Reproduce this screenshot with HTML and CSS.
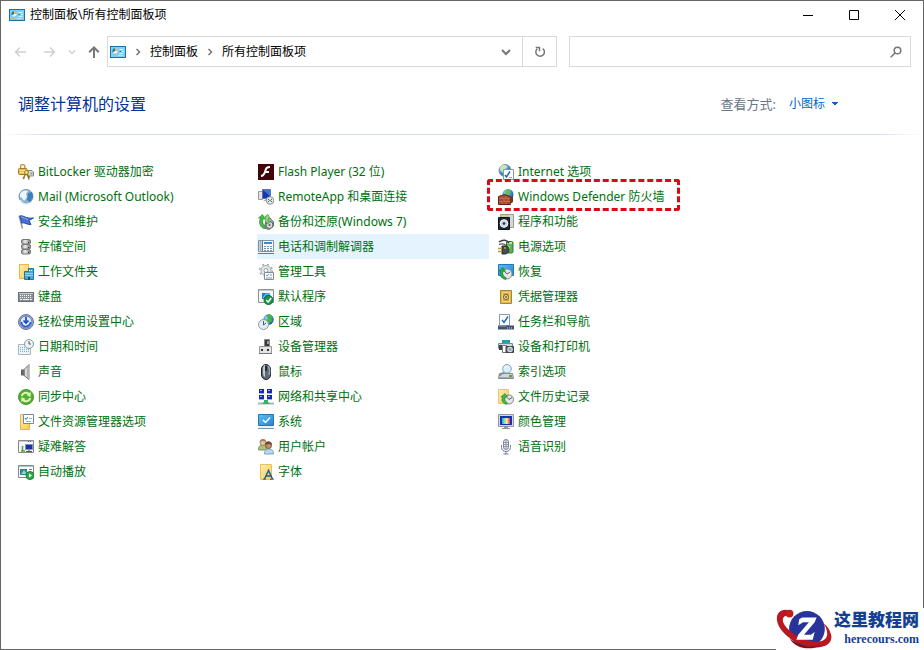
FILE: index.html
```html
<!DOCTYPE html>
<html lang="zh-CN">
<head>
<meta charset="utf-8">
<title>控制面板\所有控制面板项</title>
<link rel="stylesheet" href="styles.css">
</head>
<body>
<svg class="defs" aria-hidden="true">
  <defs>
    <linearGradient id="metal" x1="0" x2="1"><stop offset="0" stop-color="#888"/><stop offset=".4" stop-color="#eee"/><stop offset="1" stop-color="#777"/></linearGradient>
    <linearGradient id="folder" x1="0" x2="1" y2="1"><stop offset="0" stop-color="#ffefb0"/><stop offset="1" stop-color="#f5ca55"/></linearGradient>
    <linearGradient id="screen" x1="0" x2="1" y2="1"><stop offset="0" stop-color="#5cc0f5"/><stop offset="1" stop-color="#2383d4"/></linearGradient>
    <linearGradient id="spectrum" x1="0" x2="1"><stop offset="0" stop-color="#12b5d8"/><stop offset=".35" stop-color="#8fe9a0"/><stop offset=".6" stop-color="#fff27a"/><stop offset="1" stop-color="#e5306a"/></linearGradient>
    <radialGradient id="globe" cx=".35" cy=".3" r=".8"><stop offset="0" stop-color="#9bdcff"/><stop offset=".5" stop-color="#3a94d8"/><stop offset="1" stop-color="#154f98"/></radialGradient>
    <symbol id="panel" viewBox="0 0 16 12">
      <rect x=".5" y=".5" width="15" height="11" fill="#7fd0f7" stroke="#1b6fa8"/>
      <circle cx="5" cy="5" r="2.500" fill="#e2f5ff"/><path d="M5 5V2.300A2.700 2.700 0 0 1 7.700 5Z" fill="#f5b928"/><path d="M5 5 2.700 6.500A2.700 2.700 0 0 1 5 2.300Z" fill="#2378b5"/>
      <path d="M3 9.500h3" stroke="#e5b83d"/><path d="M8 9.500h5" stroke="#b5e4fa"/><path d="M9.500 3.500h4M9.500 7.500h4" stroke="#d5f1ff"/><path d="M9.500 5.500h2" stroke="#236c9f"/><path d="M11.500 5.500h2" stroke="#fff"/>
    </symbol>
    <symbol id="chevron" viewBox="0 0 8 8"><path d="m2.500 1 3 3-3 3" fill="none" stroke="#777" stroke-width="1.500"/></symbol>
  </defs>
</svg>

<div class="window">
  <header class="titlebar">
    <svg class="app-icon"><use href="#panel"/></svg>
    <h1 class="window-title">控制面板\所有控制面板项</h1>
    <div class="window-buttons">
      <button type="button" aria-label="最小化"><svg viewBox="0 0 10 10"><path d="M0 5.500h10"/></svg></button>
      <button type="button" aria-label="最大化"><svg viewBox="0 0 10 10"><path d="M.5.500h9v9h-9z"/></svg></button>
      <button type="button" aria-label="关闭"><svg viewBox="0 0 10 10"><path d="m0 0 10 10M10 0 0 10"/></svg></button>
    </div>
  </header>

  <div class="toolbar">
    <nav class="history">
      <button type="button" aria-label="后退" disabled><svg viewBox="0 0 12 12"><path d="M12 6H1.500M6 1.500 1.500 6 6 10.500"/></svg></button>
      <button type="button" aria-label="前进" disabled><svg viewBox="0 0 12 12"><path d="M0 6h10.500M6 1.500 10.500 6 6 10.500"/></svg></button>
      <button type="button" class="recent" aria-label="最近" disabled><svg viewBox="0 0 8 12"><path d="m1 4.500 3 3 3-3"/></svg></button>
      <button type="button" class="up" aria-label="向上"><svg viewBox="0 0 12 12"><path d="M6 12V1.500M1.200 6.300 6 1.500l4.800 4.800"/></svg></button>
    </nav>
    <div class="address">
      <svg class="app-icon"><use href="#panel"/></svg>
      <svg class="crumb-arrow"><use href="#chevron"/></svg>
      <a href="#">控制面板</a>
      <svg class="crumb-arrow"><use href="#chevron"/></svg>
      <a href="#">所有控制面板项</a>
      <button type="button" class="history-drop" aria-label="以前的位置"><svg viewBox="0 0 12 12"><path d="m2 4 4 4 4-4"/></svg></button>
      <button type="button" class="refresh" aria-label="刷新"><svg viewBox="0 0 12 12"><path d="M8.800 2.600A4.300 4.300 0 1 1 3.200 2.800M1.700 1.500h3.800v3.800"/></svg></button>
    </div>
    <label class="search">
      <input type="search" aria-label="搜索控制面板">
      <svg viewBox="0 0 12 12"><circle cx="7.500" cy="4.500" r="3.300"/><path d="M5.200 6.800.7 11.300"/></svg>
    </label>
  </div>

  <main class="content">
    <div class="heading">
      <h2>调整计算机的设置</h2>
      <div class="view-by">
        <label for="view">查看方式:</label>
        <select id="view"><option>小图标</option></select>
      </div>
    </div>

    <ul class="items">
      <li><a href="#"><svg viewBox="0 0 16 16"><path d="M2.500 5V2.800a2.200 2.200 0 0 1 4.400 0V5" fill="none" stroke="#c39a3c" stroke-width="1.500"/><rect x=".5" y="4.500" width="8.500" height="6" rx="1" fill="#f0be4b" stroke="#a87a22"/><path d="M2 6.500h5M2 8.500h5" stroke="#ffe199"/><path d="M9 6.500h5l1.500 1.500v4H9z" fill="#d3d6db" stroke="#888"/><circle cx="8.500" cy="8.500" r="2" fill="#f3d37d" stroke="#a87a22"/><path d="m7.500 10-2.500 5M9.500 10l1.500 5.500M5.500 13.500l1.500.5M10.500 13h1.500" fill="none" stroke="#96691f" stroke-width="1.300"/><circle cx="13.500" cy="9.500" r="1" fill="#53b956"/></svg>BitLocker 驱动器加密</a></li>
      <li><a href="#"><svg viewBox="0 0 16 16"><circle cx="8" cy="7.500" r="7" fill="#86b5d8" stroke="#7f93a5"/><path d="M2 5C4 1 8 1 10 2L8 5l1 3-3 4-2-3-2-1z" fill="#eef6fb"/><path d="m10 4 4-1 1 5-3 5-3-2z" fill="#3f7fb8"/><path d="M2 11c2 4 6 5 10 3" fill="none" stroke="#e3eaf0" stroke-width="1.500"/></svg>Mail (Microsoft Outlook)</a></li>
      <li><a href="#"><svg viewBox="0 0 16 16"><path d="m1 1.500 3.500 13" stroke="#8d98a5" stroke-width="1.500"/><path d="M2 2c4-1 5 3 13.500 2L11 6.500l2 4C9 11 7 8 3.700 9z" fill="#496fd2" stroke="#2548a4"/><path d="M3 3c3 0 4 2 7 2.500" stroke="#91abf0" fill="none"/></svg>安全和维护</a></li>
      <li><a href="#"><svg viewBox="0 0 16 16"><g fill="url(#metal)" stroke="#777"><rect x="3.500" y=".5" width="9" height="4.500" rx="1.500"/><rect x="3.500" y="5.500" width="9" height="4.500" rx="1.500"/><rect x="3.500" y="10.500" width="9" height="4.500" rx="1.500"/></g><path d="M10 3.500h1M10 8.500h1M10 13.500h1" stroke="#333"/></svg>存储空间</a></li>
      <li><a href="#"><svg viewBox="0 0 16 16"><path d="M1.500.500h9v14h-9z" fill="url(#folder)" stroke="#e2b848"/><path d="M6.500 7.500h4v-3h5v11h-9z" fill="#49a9d2" stroke="#1e759e"/><path d="M11 6.500h4M7.500 9.500h7M7.500 11.500h7" stroke="#e5f8ff" stroke-dasharray="1 1"/><path d="M10 13h2v2.500h-2z" fill="#124e6f"/></svg>工作文件夹</a></li>
      <li><a href="#"><svg viewBox="0 0 16 16"><rect x=".5" y="3.500" width="15" height="9" fill="#8a9096" stroke="#6a6f75"/><path d="M1 4.500h14" stroke="#ccc"/><path d="M2 6.500h12M2 8.500h12" stroke="#fff" stroke-width="1" stroke-dasharray="1 1"/><path d="M2 10.500h2m1 0h6m1 0h2" stroke="#eee"/></svg>键盘</a></li>
      <li><a href="#"><svg viewBox="0 0 16 16"><circle cx="8" cy="8" r="7.500" fill="#aab5d1" stroke="#6675a3"/><circle cx="8" cy="8" r="6" fill="#dce9ff" stroke="#5672b5"/><path d="M8 3v6M5.500 6.500 8 9l2.500-2.500" fill="none" stroke="#1b4ac3" stroke-width="1.700"/><path d="M3.500 8a4.500 4.500 0 0 0 9 0" fill="none" stroke="#2859bf" stroke-width="1.700"/></svg>轻松使用设置中心</a></li>
      <li><a href="#"><svg viewBox="0 0 16 16"><path d="M.5 5.500h12v10H.500z" fill="#edf4f8" stroke="#a5b8c2"/><path d="M2 8.500h9M2 10.500h9M2 12.500h9" stroke="#70b3cb" stroke-dasharray="1 1"/><circle cx="11" cy="5" r="4.500" fill="#f0f3f4" stroke="#8c969b"/><path d="M11 2v3h2" fill="none" stroke="#485a66"/></svg>日期和时间</a></li>
      <li><a href="#"><svg viewBox="0 0 16 16"><path d="M3 5.500h3v6H3z" fill="#60656a"/><path d="m6 5.500 5-5v15l-5-4z" fill="url(#metal)" stroke="#777"/><path d="M11 1v14" stroke="#c7c7c7" stroke-width="1.500"/></svg>声音</a></li>
      <li><a href="#"><svg viewBox="0 0 16 16"><circle cx="8" cy="8" r="7.500" fill="#52b038" stroke="#44992d"/><path d="M3.800 7A4.300 4.300 0 0 1 11 5M12.200 9A4.300 4.300 0 0 1 5 11" fill="none" stroke="#e7f7b0" stroke-width="2"/><path d="m12.800 3-.3 5L8.500 6zM3.200 13l.3-5 4 2z" fill="#e7f7b0"/></svg>同步中心</a></li>
      <li><a href="#"><svg viewBox="0 0 16 16"><path d="M2.500.500h9v15h-9z" fill="url(#folder)" stroke="#e3b450"/><path d="M5.500.500h10v9h-10z" fill="#fff" stroke="#718aa0"/><path d="m7 4 1 1.500L10 3" fill="none" stroke="#2876c7"/><path d="M11 4.500h3M8 7.500h5" stroke="#9db4c7"/></svg>文件资源管理器选项</a></li>
      <li><a href="#"><svg viewBox="0 0 16 16"><path d="M.5 1.500h15v12H.500z" fill="#f7f7f7" stroke="#888"/><path d="M1 2.500h14" stroke="#c5d0d9"/><path d="M10 2.500h4" stroke="#526575" stroke-dasharray="1 1"/><path d="M7.500 5.500h7v5h-7z" fill="#1735a7" stroke="#8293af"/><path d="M8 12.500h6M11 11v2" stroke="#555"/><path d="M4.500 7v5M3 12h4" stroke="#5b9838" stroke-width="1.500"/></svg>疑难解答</a></li>
      <li><a href="#"><svg viewBox="0 0 16 16"><path d="M.5 1.500h15v12H.500z" fill="#fbfbfb" stroke="#888"/><path d="M1 2.500h14" stroke="#b8c1c7"/><path d="M2 5h7v6H2z" fill="#248791"/><path d="m3 10 3-4 3 4z" fill="#93d5bc"/><path d="M11 5.500h3" stroke="#589"/><circle cx="12" cy="11.500" r="4" fill="#32a64c" stroke="#168337"/><path d="m11 9.500 3 2-3 2z" fill="#fff"/></svg>自动播放</a></li>

      <li><a href="#"><svg viewBox="0 0 16 16"><path d="M0 0h16v16H0z" fill="#430608"/><path d="M12 3C8 3 8 5 7 8s-2 4-4 4M7 8h4" fill="none" stroke="#fff" stroke-width="2"/></svg>Flash Player (32 位)</a></li>
      <li><a href="#"><svg viewBox="0 0 16 16"><path d="M.5 2.500h4v8h-4z" fill="#e4e4e4" stroke="#999"/><path d="M4.500.500h8v9h-8z" fill="#1537b2" stroke="#6273b2"/><path d="m5 1 7 6V1z" fill="#4772dc"/><path d="M5 12h5l1-2H8z" fill="#aaa"/><circle cx="12" cy="11.500" r="3.800" fill="#dfe5e6" stroke="#8d999b"/><path d="m10 10 1.500 1.500L10 13m4-3-1.500 1.500L14 13" fill="none" stroke="#417c46"/></svg>RemoteApp 和桌面连接</a></li>
      <li><a href="#"><svg viewBox="0 0 16 16"><path d="m8 7 4-3 3.500 4v4L11 15.500 6 14z" fill="#aeb2ae" stroke="#686c68"/><circle cx="11.500" cy="11" r="3.500" fill="#d8dad8" stroke="#5b645f"/><circle cx="11.500" cy="11" r="1" fill="#555"/><path d="M5.500 14.500C1 12 1 7 2.500 4H.500l4-3.500L7 5H5c-1 3 0 6 3 8z" fill="#4bb84b" stroke="#2a8c33" stroke-width=".7"/><path d="M10 10C7 8 7 5 8 3H6.500L10 .500l2 4h-1.500C10 6 10 8 11.500 9z" fill="#8ed675" stroke="#3c9a42" stroke-width=".7"/></svg>备份和还原(Windows 7)</a></li>
      <li><a href="#" class="hovered"><svg viewBox="0 0 16 16"><path d="M.5 1.500h15v11H.500z" fill="#f4f8fa" stroke="#8191a0"/><path d="M2.500 2v11" stroke="#9ab0c2" stroke-width="2"/><path d="M4.500 2v10" stroke="#66798a"/><path d="M6 3h8v2H6z" fill="#398bc6"/><path d="M6 7.500h8M6 9.500h8M6 11.500h8" stroke="#7d90a2" stroke-dasharray="2 1"/><path d="M0 14.500h16" stroke="#707b85"/></svg>电话和调制解调器</a></li>
      <li><a href="#"><svg viewBox="0 0 16 16"><circle cx="8" cy="6.500" r="5" fill="#e5e8ea" stroke="#a1a8ad"/><circle cx="8" cy="6.500" r="6.300" fill="none" stroke="#a1a8ad" stroke-width="1.500" stroke-dasharray="2 3"/><circle cx="8" cy="6.500" r="2" fill="#fff" stroke="#92999d"/><path d="M6.500 8.500h9v7h-9z" fill="#f7fbfe" stroke="#7d8e9b"/><path d="m8 11 1 1 2-2m1 1h2m-6 3h6" fill="none" stroke="#7e9cb5"/></svg>管理工具</a></li>
      <li><a href="#"><svg viewBox="0 0 16 16"><path d="M.5.500h15v13H.500z" fill="#f3f7fa" stroke="#899299"/><path d="M1 1.500h14" stroke="#c2ccd3"/><path d="M4 4h8v6H4z" fill="#2876ce"/><path d="M5 9 8 5h4" fill="none" stroke="#94d5ff"/><circle cx="10.500" cy="11" r="4.500" fill="#179447" stroke="#087430"/><path d="m8.200 11 2 2 3-4" fill="none" stroke="#fff" stroke-width="1.500"/></svg>默认程序</a></li>
      <li><a href="#"><svg viewBox="0 0 16 16"><circle cx="10.500" cy="5.500" r="5.200" fill="url(#globe)"/><path d="m8 1 4-1 3 3-2 1 1 3-4 3-2-3 2-2z" fill="#48b34b"/><circle cx="5.500" cy="10.500" r="5" fill="#e4edf2" stroke="#8b9aa5"/><path d="M5.500 7v4L8 9" fill="none" stroke="#446177"/></svg>区域</a></li>
      <li><a href="#"><svg viewBox="0 0 16 16"><path d="M6.500.500h5v7h-5z" fill="#373a3e" stroke="#888"/><path d="M10 2v3" stroke="#fff"/><path d="M1.500 7.500h12v7h-12z" fill="#e4e4e4" stroke="#999"/><path d="M3 10h2v2H3zm6 0h2v2H9z" fill="#333"/><path d="M1 14.500h13" stroke="#777"/></svg>设备管理器</a></li>
      <li><a href="#"><svg viewBox="0 0 16 16"><rect x="3.500" y=".5" width="9" height="15" rx="4.500" fill="#5d6973" stroke="#202b34"/><path d="M5 5c0-4 2-4 2-4v12c-2-1-2-4-2-4z" fill="#c2ccd4"/><path d="M10 2c2 1 2 6 1 9" fill="none" stroke="#98a5b1" stroke-width="1.500"/><path d="M8 2v5" stroke="#101820" stroke-width="1.500"/></svg>鼠标</a></li>
      <li><a href="#"><svg viewBox="0 0 16 16"><path d="M1 0h5v4H1zM9 0h5v4H9zM1 6h5v4H1zM9 6h5v4H9z" fill="#1729a8"/><path d="M2 1.500h2M10 1.500h2M2 7.500h2M10 7.500h2" stroke="#7bc0ff"/><path d="M1 4.500h5M9 4.500h5M1 10.500h5M9 10.500h5" stroke="#a7b0bd"/><path d="M0 14.500h16" stroke="#a9b8bf" stroke-width="2"/><path d="M4 15h8l-2-2v-2H6v2z" fill="#32b466"/></svg>网络和共享中心</a></li>
      <li><a href="#"><svg viewBox="0 0 16 16"><path d="M.5.500h15v11H.500z" fill="url(#screen)" stroke="#2378b3"/><path d="m5 6 2.500 2.500L12 3.500" fill="none" stroke="#fff" stroke-width="1.500"/><path d="M0 14.500h16" stroke="#7898b2"/><path d="M1 13h14" stroke="#d4e5f2"/></svg>系统</a></li>
      <li><a href="#"><svg viewBox="0 0 16 16"><path d="M.5 11C.5 7 2 6 5 6s4 2 4 5z" fill="#a3c480" stroke="#7a9a60"/><circle cx="5" cy="3.500" r="3" fill="#e4c4a3" stroke="#a9825e"/><path d="M2 3c0-4 6-4 6 0L5 2z" fill="#ad8353"/><path d="M6.500 15c0-4 2-5 4.500-5s4.500 1 4.500 5z" fill="#b7d6ec" stroke="#7fa3c0"/><circle cx="10.500" cy="6.500" r="3" fill="#c79165" stroke="#7d563b"/><path d="M7 6c0-5 7-5 7 0l-3-1z" fill="#6b4735"/></svg>用户帐户</a></li>
      <li><a href="#"><svg viewBox="0 0 16 16"><path d="M2.500.500h11v15h-11z" fill="url(#folder)" stroke="#e6c25c"/><path d="m6.500 15 4-8.500 4 8.500M8 12h5" fill="none" stroke="#225f91" stroke-width="1.500"/><path d="M5 15.200h3m4 0h4" stroke="#225f91"/></svg>字体</a></li>

      <li><a href="#"><svg viewBox="0 0 16 16"><circle cx="7" cy="6.500" r="6" fill="url(#globe)" stroke="#8497a6"/><path d="M2 3c3-4 6-2 8 0L7 5l-2 4-3-3z" fill="#c8e4ba"/><path d="M5.500 5.500h10v10h-10z" fill="#fff" stroke="#8798a5"/><path d="m7 11 1.500 2L12 7.500" fill="none" stroke="#256bc0" stroke-width="1.500"/><path d="M11 13.500h3" stroke="#9ab"/></svg>Internet 选项</a></li>
      <li class="marked"><a href="#"><svg viewBox="0 0 16 16"><circle cx="10" cy="5.500" r="5.500" fill="url(#globe)"/><path d="m7 2 3-2 3 2-1 3-4 2z" fill="#66bd5d"/><path d="m.5 7.500 6-2 6 2v8h-12z" fill="#a5482f" stroke="#622719"/><path d="M1 9.500h11M1 12.500h11M4 7v2M8 7v2M6 10v2M10 10v2M4 13v2M8 13v2" stroke="#c88268" stroke-width=".7"/><path d="M12 8.500 15 7v6l-3 2z" fill="#73331f"/></svg>Windows Defender 防火墙</a></li>
      <li><a href="#"><svg viewBox="0 0 16 16"><path d="M2.500.500h13v13h-13z" fill="#d8c995" stroke="#a39d80"/><path d="M11 1h4v12h-4z" fill="#d3d7d9"/><path d="M.5 3.500h11v12H.500z" fill="#202a33" stroke="#091520"/><circle cx="6" cy="9.500" r="3.800" fill="#cbd1de" stroke="#fff"/><circle cx="6" cy="9.500" r="1.200" fill="#202a33"/></svg>程序和功能</a></li>
      <li><a href="#"><svg viewBox="0 0 16 16"><rect x="8.500" y="2.500" width="6.500" height="11.500" rx="1.500" fill="#58b552" stroke="#2d7a30"/><path d="M9.500 4h4.500" stroke="#e3efdf" stroke-width="1.500"/><path d="M11 7v5" stroke="#a7df9b" stroke-width="1.500"/><path d="M1 3C5 0 9 1 11 4" fill="none" stroke="#3b413b" stroke-width="1.500"/><path d="M1 5.500c3-1 5-1 7 1" fill="none" stroke="#555" stroke-width="1.300"/><path d="M4 7h3c3 0 4 2 4 4s-2 4-4 4H4z" fill="#474f49" stroke="#272c28"/><path d="M0 9.500h4M0 12.500h4" stroke="#b49a42" stroke-width="1.500"/><path d="M6 9h2" stroke="#bbc3bd"/></svg>电源选项</a></li>
      <li><a href="#"><svg viewBox="0 0 16 16"><path d="M.5.500h15v11H.500z" fill="url(#screen)" stroke="#2676ba"/><circle cx="9" cy="10" r="5" fill="#e4e7e6" stroke="#869392"/><path d="m9 10-2-2m2 2 3-2" fill="none" stroke="#4f6368"/><path d="M7.500 15.500C2 14 1 10 3 7H.8l4-3.500L7.500 7.500 5 7c-1 3 0 5 3.500 7z" fill="#2ca84d" stroke="#168239" stroke-width=".7"/></svg>恢复</a></li>
      <li><a href="#"><svg viewBox="0 0 16 16"><path d="M2.500 1.500h11v13h-11z" fill="#e2b74c" stroke="#a9853a"/><path d="M4.500 3.500h7v9h-7z" fill="#d0a545" stroke="#f3d580"/><circle cx="8" cy="8" r="2.500" fill="#f5e3aa" stroke="#7e5d24"/><circle cx="8" cy="8" r="1" fill="#7c5924"/></svg>凭据管理器</a></li>
      <li><a href="#"><svg viewBox="0 0 16 16"><path d="M1.500.500h10v11h-10z" fill="#fcfdff" stroke="#8a97ad"/><path d="m4 6 2 2.500L10 2.500" fill="none" stroke="#256fb0" stroke-width="1.500"/><path d="M0 11.500h16v4H0z" fill="#40536c"/><path d="M1 12h7" stroke="#92a9c5"/><path d="M9 14h5" stroke="#c4d8ed" stroke-dasharray="1 1"/></svg>任务栏和导航</a></li>
      <li><a href="#"><svg viewBox="0 0 16 16"><path d="M4 1h8v4H4z" fill="#2b9aa9"/><path d="M.5 4.500h14v5H.500z" fill="#d3d6da" stroke="#7b868f"/><path d="M1 6h3v5H1z" fill="#3d464e"/><path d="M4.500 6.500h4v7h-4z" fill="#fff" stroke="#777"/><path d="M8 7.500h7.500v6H8z" fill="#59626a" stroke="#3c444b"/><circle cx="12" cy="10.500" r="2.300" fill="#8faabd" stroke="#eee"/></svg>设备和打印机</a></li>
      <li><a href="#"><svg viewBox="0 0 16 16"><path d="M1.500 9.500h13l1 5H.500z" fill="#d3d7dc" stroke="#7e8992"/><path d="M1 13.500h14" stroke="#a3abb2"/><path d="M11 12h3" stroke="#6c9a45" stroke-width="2"/><path d="m5.500 8-4 4" stroke="#7a8b99" stroke-width="1.500"/><circle cx="9" cy="4.800" r="4.300" fill="#d6efff" fill-opacity=".9" stroke="#8a9cab"/><path d="M6.500 4c1-2 3-2 4-1" fill="none" stroke="#fff"/></svg>索引选项</a></li>
      <li><a href="#"><svg viewBox="0 0 16 16"><path d="M.5.500h10v14H.500z" fill="url(#folder)" stroke="#e8c86c"/><circle cx="11" cy="10.500" r="4.500" fill="#e4e7e8" stroke="#7b8888"/><path d="m11 10.500-2-2m2 2 3-2" fill="none" stroke="#536167"/><path d="M8.500 15.500C4 14 3 11 5 8H3l4-3.500L9.500 8H7c-1 3 0 4 2.500 6z" fill="#49b745" stroke="#21892f" stroke-width=".7"/></svg>文件历史记录</a></li>
      <li><a href="#"><svg viewBox="0 0 16 16"><path d="M.5.500h15v12H.500z" fill="#d5d8df" stroke="#9298a4"/><path d="M2 2h12v9H2z" fill="#1431b4"/><path d="M4 4h8v6H4z" fill="url(#spectrum)"/><path d="M6 12h4v2h2v1H4v-1h2z" fill="#8c949e"/></svg>颜色管理</a></li>
      <li><a href="#"><svg viewBox="0 0 16 16"><rect x="5.500" y=".5" width="5" height="10" rx="2.500" fill="#e7e9ef" stroke="#7b829b"/><path d="M5.500 3.500h5M5.500 5.500h5M5.500 7.500h5M8 1v9" stroke="#838ba4" stroke-width=".8"/><path d="M3.500 6v2.500a4.500 4 0 0 0 9 0V6M5.500 15h5M8 12.500V15" fill="none" stroke="#747b99"/></svg>语音识别</a></li>
    </ul>
  </main>
</div>

<aside class="brand">
  <svg viewBox="0 0 60 42" aria-hidden="true">
    <circle cx="32" cy="21" r="18.500" fill="#28349a"/>
    <path d="M14 2C6-1 0 4 1 12c2 14 22 27 38 28 13 1 20-5 18-13-1-5-4-9-8-12 7 10 5 20-8 19C25 33 8 21 7 12c0-4 3-6 7-4z" fill="#b81820"/>
    <path d="M14 30c8 8 21 12 33 7-9 7-28 5-33-7z" fill="#850d12"/>
    <circle cx="14" cy="5" r="4" fill="#c41b20"/>
    <path d="m24 11 3-2h15l-2 5-11 13h7l4-3-2 8H21l2-5 11-13h-6l-5 3z" fill="#fff"/>
  </svg>
  <div class="brand-text"><strong>这里教程网</strong><span>herecours.com</span></div>
</aside>
</body>
</html>
```
FILE: styles.css
```css
*, *::before, *::after { box-sizing: border-box; }

body {
  margin: 0;
  background: #fff;
  color: #000;
  font: 12px/16px "Noto Sans", "Noto Sans CJK SC", sans-serif;
}

.defs { position: absolute; width: 0; height: 0; }

.window {
  display: flex;
  flex-direction: column;
  min-height: 100vh;
  border: 1px solid #666;
}

a { color: inherit; text-decoration: none; }
svg { flex: none; }

button {
  display: flex;
  align-items: center;
  justify-content: center;
  padding: 0;
  border: 0;
  background: none;
  color: #777;
}

button svg, .search svg {
  width: 12px;
  height: 12px;
  fill: none;
  stroke: currentColor;
  stroke-width: 2;
}

.app-icon { width: 16px; height: 12px; }

.titlebar {
  display: flex;
  align-items: center;
  gap: 5px;
  height: 28px;
  padding-left: 8px;
}

.window-title { margin: 0; font-size: 12px; font-weight: 400; line-height: 16px; }

.window-buttons { display: flex; margin-left: auto; }
.window-buttons button { width: 46px; height: 28px; color: #000; }
.window-buttons svg { width: 10px; height: 10px; stroke-width: 1; }

.toolbar {
  display: flex;
  gap: 12px;
  height: 31px;
  margin: 7px 12px 0;
}

.history {
  display: flex;
  align-items: center;
  gap: 18px;
  margin-right: -5px;
  padding-left: 1px;
}

.history button:disabled { color: #d0d0d0; }
.history button:disabled svg { stroke-width: 1.5; }
.history .recent { margin: 0 -6px; }
.history .recent svg { width: 8px; }

.address {
  display: flex;
  flex: 446;
  align-items: center;
  padding-left: 2px;
  border: 1px solid #d9d9d9;
}

.crumb-arrow { width: 8px; height: 8px; margin: 0 8px; }
.history-drop { width: 32px; margin-left: auto; }
.refresh { align-self: stretch; width: 34px; border-left: 1px solid #d9d9d9; }
.refresh svg { stroke-width: 1.5; }

.search {
  display: flex;
  flex: 332;
  align-items: center;
  padding-right: 8px;
  border: 1px solid #d9d9d9;
  color: #777;
}

.search svg { stroke-width: 1.5; }

.search input {
  flex: 1;
  min-width: 0;
  height: 28px;
  border: 0;
  outline: 0;
  font: inherit;
}

.heading {
  display: flex;
  align-items: center;
  justify-content: space-between;
  height: 68px;
  padding: 6px 84px 0 17px;
  border-bottom: 1px solid;
  border-image: linear-gradient(90deg, #fff, #d5e1e8 5%, #d5e1e8 95%, #fff) 1;
}

.heading h2 { margin: 0; color: #003399; font-size: 16px; font-weight: 400; line-height: 24px; }

.view-by { display: flex; align-items: center; gap: 13px; color: #697685; }
.view-by label { font-size: 13px; }

.view-by select {
  width: 50px;
  padding: 0;
  border: 0;
  appearance: none;
  background:
    linear-gradient(to bottom left, #0066cc 50%, transparent 50%) right 4px top 6px / 4px 4px no-repeat,
    linear-gradient(to bottom right, #0066cc 50%, transparent 50%) right 0 top 6px / 4px 4px no-repeat;
  color: #0066cc;
  font: inherit;
}

.items {
  display: grid;
  grid-template-rows: repeat(13, 25px);
  grid-template-columns: repeat(3, 232px);
  grid-auto-flow: column;
  column-gap: 8px;
  margin: 0;
  padding: 24px 16px 0;
  list-style: none;
}

.items li { position: relative; }

.items a {
  display: flex;
  align-items: center;
  gap: 4px;
  height: 25px;
  padding-left: 1px;
  color: #00700f;
  white-space: nowrap;
}

.items svg { width: 16px; height: 16px; }
.items .hovered { background: #e5f3ff; }

.marked::after {
  content: "";
  position: absolute;
  inset: -5px auto -2px -10px;
  width: 193px;
  border: 3px dashed #dc0812;
  border-radius: 3px;
}

.brand {
  position: absolute;
  right: 0;
  bottom: 0;
  display: flex;
  align-items: center;
  padding-right: 5px;
  background: #fff;
}

.brand svg { width: 58px; height: 42px; }

.brand-text {
  display: flex;
  flex-direction: column;
  align-items: flex-end;
  color: #153f91;
  font-family: "Liberation Serif", "Noto Sans CJK SC", serif;
  font-weight: 700;
}

.brand-text strong { font-size: 17px; font-weight: 900; line-height: 20px; }
```
